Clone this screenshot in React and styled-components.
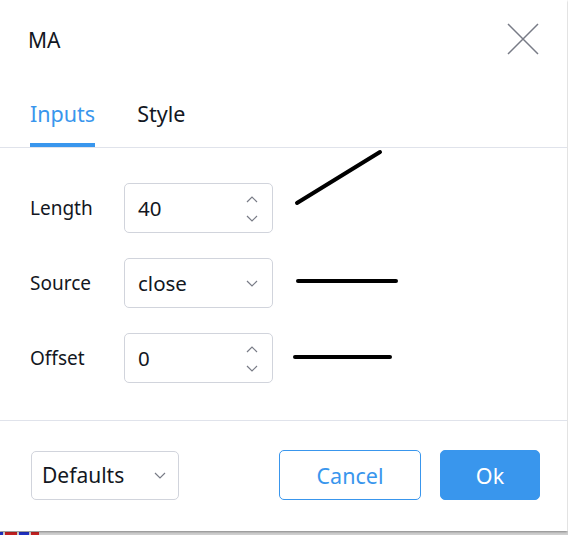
import React from "react";
import styled, { createGlobalStyle } from "styled-components";

const GlobalStyle = createGlobalStyle`
  html, body {
    margin: 0;
    padding: 0;
    background: #c9c9c9;
  }
  body {
    font-family: "Noto Sans", "Open Sans", sans-serif;
    color: #131722;
  }
`;

const Page = styled.div`
  width: 568px;
  height: 535px;
  display: flex;
  flex-direction: column;
  background: #ffffff;
`;

const Dialog = styled.div`
  width: 567px;
  height: 531px;
  background: #ffffff;
  box-shadow: 0 1px 2px rgba(0, 0, 0, 0.35);
  display: flex;
  flex-direction: column;
  position: relative;
  z-index: 1;
`;

const Header = styled.div`
  height: 80px;
  display: flex;
  align-items: center;
  justify-content: space-between;
  padding: 0 28px 0 28px;
  box-sizing: border-box;
`;

const Title = styled.div`
  font-size: 21px;
  line-height: 24px;
  color: #131722;
`;

const CloseButton = styled.button`
  width: 32px;
  height: 32px;
  padding: 0;
  border: 0;
  background: transparent;
  display: flex;
  align-items: center;
  justify-content: center;
  margin-top: -2px;
`;

const Tabs = styled.div`
  height: 67px;
  display: flex;
  gap: 42px;
  padding: 0 30px;
  border-bottom: 1px solid #e0e3eb;
`;

const Tab = styled.div`
  display: flex;
  flex-direction: column;
  justify-content: space-between;
  padding-top: 22px;
  font-size: 21.5px;
  line-height: 24px;
  color: ${(p) => (p.$active ? "#3996ed" : "#131722")};

  &::after {
    content: "";
    display: block;
    height: 4px;
    background: ${(p) => (p.$active ? "#3996ed" : "transparent")};
  }
`;

const Body = styled.div`
  padding: 35px 0 37px 30px;
  display: flex;
  flex-direction: column;
  gap: 25px;
  border-bottom: 1px solid #e0e3eb;
`;

const Row = styled.div`
  display: grid;
  grid-template-columns: 94px 149px 1fr;
  align-items: center;
  height: 50px;
`;

const Label = styled.div`
  font-size: 19px;
  color: #131722;
`;

const Field = styled.div`
  height: 50px;
  box-sizing: border-box;
  border: 1px solid #d1d4dc;
  border-radius: 5px;
  display: flex;
  align-items: center;
  justify-content: space-between;
  padding: 0 14px 0 13px;
  font-size: 20.5px;
  color: #131722;
  background: #fff;
`;

const Spinner = styled.div`
  display: flex;
  flex-direction: column;
  gap: 12px;
  margin-top: 1px;
`;

const Stroke = styled.svg`
  overflow: visible;
  display: block;
`;

const Footer = styled.div`
  flex: 1;
  display: flex;
  align-items: center;
  padding: 0 27px 0 31px;
  margin-top: -2px;
`;

const SelectBox = styled(Field)`
  width: 148px;
  height: 49px;
  padding: 0 12px 0 10px;
  font-size: 21px;
`;

const Spacer = styled.div`
  flex: 1;
`;

const Button = styled.button`
  height: 50px;
  width: ${(p) => p.$width}px;
  box-sizing: border-box;
  border-radius: 5px;
  font-family: inherit;
  font-size: 21.5px;
  border: 1px solid #3996ed;
  background: ${(p) => (p.$primary ? "#3996ed" : "#ffffff")};
  color: ${(p) => (p.$primary ? "#ffffff" : "#3996ed")};
  margin-left: ${(p) => p.$gap || 0}px;
  padding: 0;
`;

const Desk = styled.div`
  flex: 1;
  display: flex;
  align-items: flex-end;
  background: #cfcfcf;
`;

const Chip = styled.div`
  width: ${(p) => p.$w}px;
  height: 3px;
  background: ${(p) => p.$c};
  margin-right: 2px;
`;

function Chevron({ up }) {
  return (
    <svg width="12" height="7" viewBox="0 0 12 7">
      <path
        d={up ? "M1 6 L6 1 L11 6" : "M1 1 L6 6 L11 1"}
        fill="none"
        stroke="#787b86"
        strokeWidth="1.2"
      />
    </svg>
  );
}

function NumberField({ value }) {
  return (
    <Field>
      <span>{value}</span>
      <Spinner>
        <Chevron up />
        <Chevron />
      </Spinner>
    </Field>
  );
}

export default function App() {
  return (
    <>
      <GlobalStyle />
      <Page>
        <Dialog>
          <Header>
            <Title>MA</Title>
            <CloseButton aria-label="close">
              <svg width="32" height="32" viewBox="0 0 32 32">
                <path
                  d="M1 1 L31 31 M31 1 L1 31"
                  stroke="#787b86"
                  strokeWidth="1.5"
                  fill="none"
                />
              </svg>
            </CloseButton>
          </Header>

          <Tabs>
            <Tab $active>Inputs</Tab>
            <Tab>Style</Tab>
          </Tabs>

          <Body>
            <Row>
              <Label>Length</Label>
              <NumberField value="40" />
              <Stroke width="120" height="50">
                <path d="M24 20 L107 -31" stroke="#000" strokeWidth="4" strokeLinecap="round" />
              </Stroke>
            </Row>
            <Row>
              <Label>Source</Label>
              <Field>
                <span>close</span>
                <Chevron />
              </Field>
              <Stroke width="130" height="50">
                <path d="M25 23 L123 23" stroke="#000" strokeWidth="4" strokeLinecap="round" />
              </Stroke>
            </Row>
            <Row>
              <Label>Offset</Label>
              <NumberField value="0" />
              <Stroke width="130" height="50">
                <path d="M22 24 L117 24" stroke="#000" strokeWidth="4" strokeLinecap="round" />
              </Stroke>
            </Row>
          </Body>

          <Footer>
            <SelectBox>
              <span>Defaults</span>
              <Chevron />
            </SelectBox>
            <Spacer />
            <Button $width={142}>Cancel</Button>
            <Button $width={100} $primary $gap={19}>
              Ok
            </Button>
          </Footer>
        </Dialog>
        <Desk>
          <Chip $w={3} $c="#2030c0" />
          <Chip $w={12} $c="#c02020" />
          <Chip $w={10} $c="#2030c0" />
          <Chip $w={8} $c="#c02020" />
        </Desk>
      </Page>
    </>
  );
}
